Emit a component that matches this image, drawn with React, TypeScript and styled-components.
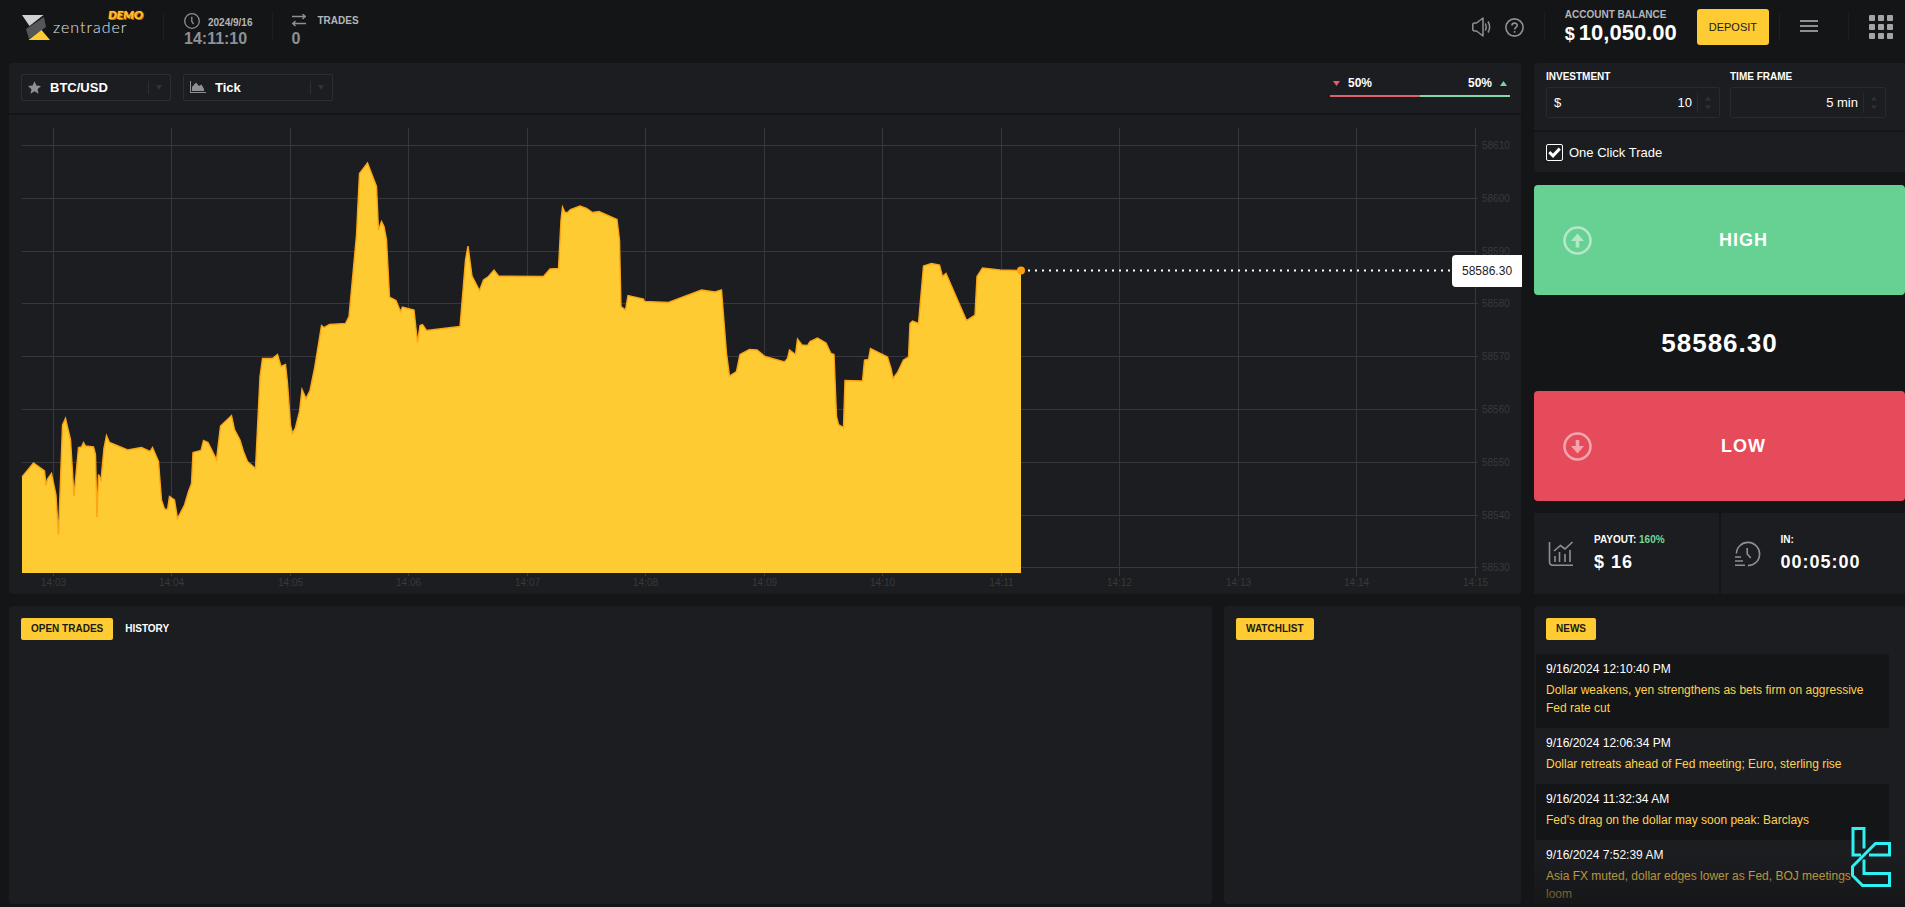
import React, { useState } from "react";
import styled, { createGlobalStyle } from "styled-components";

const color = {
  page: "#141517",
  panel: "#1c1d20",
  line: "#141518",
  border: "#2d2e33",
  muted: "#8f9095",
  label: "#b4b5b8",
  accent: "#ffcb32",
  green: "#67d194",
  red: "#e54b5a",
};

const GlobalStyle = createGlobalStyle`
  *, *::before, *::after { box-sizing: border-box; }
  body {
    margin: 0;
    background: ${color.page};
    color: #fff;
    font-family: "Liberation Sans", Arial, sans-serif;
    font-size: 12px;
  }
  button, input, select { font: inherit; color: inherit; margin: 0; }
  button { border: 0; padding: 0; background: none; cursor: pointer; }
  a { text-decoration: none; color: inherit; }
  svg { display: block; flex: none; }
`;

const Page = styled.div`
  display: flex;
  flex-direction: column;
  height: 100vh;
  min-height: 720px;
  overflow: hidden;
`;

/* ---------- header ---------- */

const Header = styled.header`
  display: flex;
  align-items: center;
  height: 54px;
  padding: 0 12px 0 20px;
  margin-bottom: 9px;
`;

const Separator = styled.span<{ $gap?: number }>`
  width: 1px;
  height: 28px;
  margin: 0 ${(p) => p.$gap ?? 20}px;
  background: #1e1f22;
`;

const Brand = styled.a`
  position: relative;
  display: flex;
  align-items: center;
  gap: 1px;
  width: 123px;
`;

const BrandName = styled.span`
  font-family: Lato, "Open Sans", sans-serif;
  font-weight: 300;
  font-size: 16px;
  line-height: 20px;
  letter-spacing: 1px;
  color: #e4e4e4;
`;

const DemoBadge = styled.span`
  position: absolute;
  right: 0;
  top: -4px;
  font-family: Lato, sans-serif;
  font-weight: 900;
  font-style: italic;
  font-size: 12px;
  line-height: 12px;
  color: #ffc42b;
  text-shadow: 0 0 1px #f08a10, 1px 1px 0 #c97a08;
`;

const Stat = styled.div`
  padding-top: 8px;
  font-weight: bold;
`;

const StatTop = styled.div<{ $align?: string; $gap: number }>`
  display: flex;
  align-items: ${(p) => p.$align ?? "center"};
  gap: ${(p) => p.$gap}px;
  height: 16px;
  font-size: 10px;
  line-height: 12px;
  color: ${color.label};
`;

const StatValue = styled.div`
  font-size: 16px;
  line-height: 20px;
  color: ${color.muted};
`;

const Spacer = styled.span`
  flex: 1;
`;

const IconButton = styled.button<{ $pad?: number; $gap?: number }>`
  padding: 0 ${(p) => p.$pad ?? 0}px;
  margin-right: ${(p) => p.$gap ?? 0}px;
  color: ${color.muted};
`;

const Balance = styled.div`
  margin-right: 20px;
  font-weight: bold;
`;

const BalanceLabel = styled.div`
  font-size: 10px;
  line-height: 12px;
  color: ${color.label};
`;

const BalanceValue = styled.div`
  display: flex;
  align-items: baseline;
  gap: 4px;
  font-size: 22px;
  line-height: 24px;
`;

const Currency = styled.span`
  font-size: 18px;
`;

const DepositButton = styled.button`
  height: 36px;
  padding: 0 12px;
  border-radius: 3px;
  background: ${color.accent};
  color: #1a1a1a;
  font-size: 11px;
`;

/* ---------- layout ---------- */

const Board = styled.main`
  flex: 1;
  min-height: 0;
  display: grid;
  grid-template-columns: minmax(0, 1fr) 371px;
  grid-template-rows: auto minmax(0, 1fr);
  gap: 12px 13px;
  padding: 0 0 3px 9px;
`;

const Panel = styled.section`
  background: ${color.panel};
  border-radius: 4px;
`;

const ChartPanel = styled(Panel)`
  display: flex;
  flex-direction: column;
`;

const Toolbar = styled.div`
  display: flex;
  align-items: center;
  gap: 12px;
  height: 52px;
  padding: 0 11px 2px 12px;
  border-bottom: 2px solid ${color.line};
`;

const Picker = styled.label`
  display: grid;
  grid-template-columns: 30px 1fr 22px;
  align-items: center;
  width: 150px;
  height: 27px;
  border: 1px solid ${color.border};
  border-radius: 2px;
  color: ${color.muted};

  > svg { grid-row: 1; grid-column: 1; margin-left: 6px; }
`;

const PickerSelect = styled.select<{ $indent: number }>`
  grid-row: 1;
  grid-column: 1 / 4;
  height: 25px;
  padding: 0 0 0 ${(p) => p.$indent}px;
  border: 0;
  background: transparent;
  appearance: none;
  color: #fff;
  font-size: 13px;
  font-weight: bold;
  option { color: #000; }
`;

const CaretCell = styled.span`
  grid-row: 1;
  grid-column: 3;
  display: flex;
  align-items: center;
  height: 13px;
  padding-left: 7px;
  border-left: 1px solid ${color.border};
  pointer-events: none;
`;

const Sentiment = styled.div`
  width: 180px;
  margin-left: auto;
  padding-bottom: 6px;
`;

const SentimentRow = styled.div`
  display: flex;
  align-items: center;
  gap: 8px;
  padding: 0 3px;
  height: 24px;
  font-size: 12px;
  font-weight: bold;
  > :nth-child(2) { margin-right: auto; }
`;

const SentimentBar = styled.div`
  height: 2px;
  background: linear-gradient(90deg, #dc616b 50%, #86d8ab 50%);
`;

const ChartSvg = styled.svg`
  width: 100%;
  height: auto;
  flex: 1;
  overflow: visible;
  font-family: "Liberation Sans", Arial, sans-serif;
`;

/* ---------- trade column ---------- */

const TradeColumn = styled.aside`
  display: flex;
  flex-direction: column;
`;

const OrderPanel = styled(Panel)`
  margin-bottom: 13px;
  border-radius: 4px 0 0 4px;
`;

const Fields = styled.div`
  display: flex;
  gap: 10px;
  padding: 7px 19px 12px 12px;
  border-bottom: 2px solid ${color.line};
`;

const Field = styled.div<{ $grow: number }>`
  flex: ${(p) => p.$grow} 1 0;
  min-width: 0;
`;

const FieldLabel = styled.label`
  display: block;
  margin-bottom: 3px;
  font-size: 10px;
  line-height: 14px;
  font-weight: bold;
`;

const FieldBox = styled.div`
  display: flex;
  align-items: center;
  height: 31px;
  padding-left: 7px;
  border: 1px solid #292a2e;
  border-radius: 2px;
  font-size: 13px;
`;

const FieldInput = styled.input`
  flex: 1;
  min-width: 0;
  padding: 0 5px 0 0;
  border: 0;
  background: transparent;
  text-align: right;
  outline: none;
`;

const Stepper = styled.span`
  display: flex;
  align-items: center;
  width: 22px;
  height: 20px;
  padding-left: 7px;
  border-left: 1px solid #292a2e;
`;

const CheckLabel = styled.label`
  display: flex;
  align-items: center;
  gap: 6px;
  height: 40px;
  padding: 0 12px;
  font-size: 13px;
`;

const CheckCell = styled.span`
  display: grid;
  place-items: center;
  > * { grid-area: 1 / 1; }
  > svg { pointer-events: none; }
`;

const CheckInput = styled.input`
  width: 17px;
  height: 17px;
  margin: 0;
  appearance: none;
  border: 1px solid #fff;
  border-radius: 2px;
`;

const TradeButton = styled.button<{ $bg: string }>`
  display: flex;
  align-items: center;
  height: 110px;
  padding: 0 10px 0 29px;
  border-radius: 4px;
  background: ${(p) => p.$bg};
  font-size: 18px;
  font-weight: bold;
  letter-spacing: 1px;
  > svg { opacity: 0.5; }
`;

const TradeText = styled.span`
  flex: 1;
  text-align: center;
`;

const Price = styled.div`
  flex: 1;
  display: flex;
  align-items: center;
  justify-content: center;
  min-height: 96px;
  font-size: 26px;
  line-height: 28px;
  font-weight: bold;
  letter-spacing: 1px;
`;

const Summary = styled.div`
  display: grid;
  grid-template-columns: 1fr 1fr;
  gap: 2px;
  height: 81px;
  margin-top: 12px;
`;

const SummaryCell = styled.div`
  display: flex;
  align-items: center;
  gap: 20px;
  padding-left: 14px;
  background: ${color.panel};
  color: ${color.muted};
`;

const SummaryLabel = styled.div`
  margin-bottom: 4px;
  font-size: 10px;
  line-height: 12px;
  font-weight: bold;
  color: #fff;
`;

const Percent = styled.span`
  color: #74d79d;
`;

const SummaryValue = styled.div`
  font-size: 18px;
  line-height: 24px;
  font-weight: bold;
  letter-spacing: 1px;
  color: #fff;
`;

/* ---------- bottom row ---------- */

const BottomLeft = styled.div`
  display: grid;
  grid-template-columns: minmax(0, 1fr) 297px;
  gap: 12px;
`;

const Tabs = styled.div`
  display: flex;
  gap: 12px;
  padding: 12px 12px 14px;
`;

const Tab = styled.button<{ $active?: boolean }>`
  height: 22px;
  padding: 0 ${(p) => (p.$active ? 10 : 0)}px;
  border-radius: 2px;
  background: ${(p) => (p.$active ? color.accent : "transparent")};
  color: ${(p) => (p.$active ? "#1c1a12" : "#fff")};
  font-size: 10px;
  line-height: 12px;
  font-weight: bold;
`;

const NewsPanel = styled(Panel)`
  position: relative;
  display: flex;
  flex-direction: column;
  min-height: 0;
  overflow: hidden;
  border-radius: 4px 0 0 0;
`;

const NewsList = styled.ul`
  flex: 1;
  min-height: 0;
  overflow: hidden;
  margin: 0 16px 0 2px;
  padding: 0;
  list-style: none;
`;

const NewsItem = styled.li`
  padding: 6px 20px 11px 10px;
  line-height: 18px;
  &:nth-child(odd) { background: ${color.page}; }
`;

const NewsDate = styled.time`
  display: block;
  margin-bottom: 3px;
`;

const NewsLink = styled.a`
  display: block;
  color: #ffd24d;
`;

const NewsFade = styled.div`
  position: absolute;
  left: 0;
  right: 0;
  bottom: 0;
  height: 50px;
  background: linear-gradient(rgba(20, 21, 23, 0), rgba(20, 21, 23, 0.75));
  pointer-events: none;
`;

const Watermark = styled.svg`
  position: absolute;
  right: 14px;
  bottom: 17px;
`;

/* ---------- chart data ---------- */

const series: [number, number][] = [
  [22, 477], [33.5, 463], [44.5, 471], [46, 485], [47.5, 479], [51.5, 473.5], [56, 495], [58.5, 535],
  [62.5, 425], [65.5, 418.5], [70.5, 439.5], [74, 496], [78.5, 447.5], [81.5, 447], [83.5, 442.5],
  [85.5, 446], [93.5, 447], [95.5, 454.5], [97, 517], [98.5, 474.5], [101, 480], [104, 448],
  [106.5, 435.5], [109.5, 442.5], [120.5, 447], [127.5, 450], [141.5, 447.5], [150, 451.5],
  [152.5, 447.5], [158.5, 461.5], [161.5, 500], [164.5, 509], [167.5, 509.5], [169.5, 496.5],
  [174.5, 500], [177.5, 518.5], [184.5, 505], [188.5, 491.5], [191.5, 483.5], [193, 452.5],
  [201, 450.5], [203.5, 440.5], [208, 442.5], [216.5, 459.5], [220.5, 426], [231.5, 415.5],
  [234.5, 429.5], [240, 440], [243.5, 451.5], [247.5, 461.5], [255.5, 468.5], [260, 376.5],
  [262.5, 358.5], [272.5, 358.5], [277.5, 354.5], [281, 366.5], [285.5, 364.5], [287.5, 383],
  [290.5, 425], [292.5, 433.5], [295.5, 427.5], [299.5, 411.5], [302, 389.5], [306, 398.5],
  [310, 390.5], [314.5, 368.5], [321.5, 325.5], [324, 327.5], [329.5, 324.5], [345.5, 323.5],
  [349, 316.5], [356.5, 235], [359.5, 173.5], [367.5, 163], [376.5, 186.5], [378.5, 230],
  [381.5, 221.5], [384, 226.5], [386.5, 239.5], [389.5, 297], [396, 300.5], [400.5, 311.5],
  [402.5, 307], [414, 310], [417.5, 342.5], [420, 325.5], [422.5, 324.5], [426.5, 330.5],
  [460, 326.5], [465.5, 260], [468, 246], [472, 276], [479.5, 290.5], [483.5, 280], [488.5, 276.5],
  [494, 270], [498.5, 276], [543.5, 276.5], [550, 269], [558.5, 268.5], [561, 220], [562.5, 207],
  [565, 212.5], [567.5, 212.5], [570.5, 209.5], [580, 206], [586.5, 208.5], [592.5, 212.5],
  [599, 211.5], [617, 219.5], [619.5, 240], [621, 306.5], [625.5, 310], [628, 295.5], [643.5, 299],
  [644.5, 301.5], [668.5, 302.5], [701.5, 290], [715, 292], [721.5, 290], [726.5, 353.5],
  [729.5, 376], [736.5, 371.5], [740, 354.5], [749.5, 349.5], [757, 350], [765, 356.5], [784.5, 362],
  [787.5, 358.5], [789.5, 350], [795.5, 354.5], [797.5, 339], [802, 345], [807.5, 345.5],
  [810, 341.5], [817.5, 338], [826, 343], [831, 353.5], [834, 354.5], [836.5, 416.5], [838.5, 424.5],
  [843.5, 427.5], [845, 380.5], [862.5, 381], [864.5, 360], [868.5, 359.5], [870.5, 348.5],
  [887.5, 357], [891, 368.5], [893, 378.5], [897.5, 372.5], [903.5, 360], [908.5, 357],
  [910, 323.5], [912.5, 321], [918.5, 323.5], [923.5, 266], [931.5, 263.5], [939.5, 265],
  [942.5, 276.5], [946, 273.5], [966.5, 320.5], [975, 315], [977, 276.5], [982.5, 268],
  [1000, 270], [1021, 270.5],
];

const line = series.map(([x, y], i) => `${i ? "L" : "M"}${x} ${y}`).join("");
const area = `${line}V573H22Z`;

const times = Array.from({ length: 13 }, (_, i) => ({
  x: Math.floor(53 + i * 118.5) + 0.5,
  text: `14:${String(i + 3).padStart(2, "0")}`,
}));
const prices = Array.from({ length: 9 }, (_, i) => ({
  y: Math.round(145 + i * 52.8) + 0.5,
  text: String(58610 - i * 10),
}));

const news = [
  ["9/16/2024 12:10:40 PM", "Dollar weakens, yen strengthens as bets firm on aggressive Fed rate cut"],
  ["9/16/2024 12:06:34 PM", "Dollar retreats ahead of Fed meeting; Euro, sterling rise"],
  ["9/16/2024 11:32:34 AM", "Fed's drag on the dollar may soon peak: Barclays"],
  ["9/16/2024 7:52:39 AM", "Asia FX muted, dollar edges lower as Fed, BOJ meetings loom"],
];

/* ---------- icons ---------- */

const LogoMark = () => (
  <svg width="32" height="28" viewBox="0 0 32 28">
    <path d="M2 2H23.5L9.5 13Z" fill="#d0d1d3" />
    <path d="M24 4L26 14L9 26L6 16Z" fill="#54565a" />
    <path d="M21.5 17L30 27H8.5Z" fill={color.accent} />
  </svg>
);

const Clock = () => (
  <svg width="16" height="16" viewBox="0 0 16 16" fill="none" stroke={color.muted} strokeWidth="1.3">
    <circle cx="8" cy="8" r="7.3" />
    <path d="M7.8 3.8V8.5L9.6 11" />
  </svg>
);

const Arrows = () => (
  <svg width="14" height="14" viewBox="0 0 14 14" fill="none" stroke={color.muted} strokeWidth="1.4">
    <path d="M0 2.5H13M10.5 0L13.2 2.5L10.5 5M14 9.5H1M3.5 7L0.8 9.5L3.5 12" />
  </svg>
);

const Speaker = () => (
  <svg width="19" height="20" viewBox="0 0 19 20" fill="none" stroke="currentColor" strokeWidth="1.5">
    <path d="M11 1V19L4.5 14H2.5Q0.8 14 0.8 12V8Q0.8 6 2.5 6H4.5Z" strokeLinejoin="round" />
    <path d="M13.3 6.5Q15 10 13.3 13.5M16 4.5Q19.2 10 16 15.5" />
  </svg>
);

const Help = () => (
  <svg width="19" height="19" viewBox="0 0 19 19" fill="none" stroke="currentColor" strokeWidth="1.6">
    <circle cx="9.5" cy="9.5" r="8.6" />
    <path d="M6.9 7.6C6.9 4.3 12.2 4.3 12.2 7.4C12.2 9.3 9.6 9.3 9.6 11.4M9.6 13V14.8" />
  </svg>
);

const Menu = () => (
  <svg width="18" height="14" viewBox="0 0 18 14" fill="currentColor">
    <path d="M0 0H18V2H0ZM0 5H18V7H0ZM0 10H18V12H0Z" />
  </svg>
);

const Apps = () => (
  <svg width="24" height="24" viewBox="0 0 24 24" fill="#a3a4a8">
    {[0, 9, 18].map((y) => [0, 9, 18].map((x) => <rect key={`${x}-${y}`} x={x} y={y} width="6" height="6" rx="1" />))}
  </svg>
);

const Star = () => (
  <svg width="13" height="13" viewBox="0 0 24 24" fill={color.muted}>
    <path d="M12 0.5L15.5 8.4L24 9.3L17.6 15L19.4 23.5L12 19.1L4.6 23.5L6.4 15L0 9.3L8.5 8.4Z" />
  </svg>
);

const AreaIcon = () => (
  <svg width="16" height="12" viewBox="0 0 16 12" fill={color.muted}>
    <path d="M0 0H1V11H16V12H0ZM2 10V6L6 1.5L9 5L11.5 3.5L14 8V10Z" />
  </svg>
);

const Triangle = ({ up, fill, size = 7 }: { up?: boolean; fill: string; size?: number }) => (
  <svg width={size} height="5" viewBox="0 0 7 5" fill={fill}>
    <path d={up ? "M0 5L3.5 0L7 5Z" : "M0 0H7L3.5 5Z"} />
  </svg>
);

const StepArrows = () => (
  <svg width="6" height="14" viewBox="0 0 6 14" fill="#303136">
    <path d="M0 4.5L3 0.5L6 4.5ZM0 9.5H6L3 13.5Z" />
  </svg>
);

const CircleArrow = ({ down }: { down?: boolean }) => (
  <svg width="29" height="29" viewBox="0 0 29 29">
    <circle cx="14.5" cy="14.5" r="13" fill="none" stroke="#fff" strokeWidth="2.6" />
    <path d={down ? "M12.7 8H16.3V14H21L14.5 21.5L8 14H12.7Z" : "M12.7 21.5H16.3V15H21L14.5 7.5L8 15H12.7Z"} fill="#fff" />
  </svg>
);

const PayoutIcon = () => (
  <svg width="26" height="26" viewBox="0 0 26 26" fill="none" stroke="currentColor" strokeWidth="1.6">
    <path d="M1.5 1V20.5Q1.5 24.2 5 24.2H25" />
    <path d="M6 10L12.5 4.5L17 8L24.5 1M7 15V21M11.5 11V21M17 13V21M22 9V21" />
  </svg>
);

const ExpiryIcon = () => (
  <svg width="26" height="26" viewBox="0 0 26 26" fill="none" stroke="currentColor" strokeWidth="1.6">
    <path d="M1.4 12.5A11.6 11.6 0 1 1 13 24.6" />
    <path d="M12.2 7V13L15.8 17M0 16H6M0 20H8M0 24.2H10" />
  </svg>
);

interface SelectProps {
  label: string;
  icon: React.ReactNode;
  value: string;
  indent: number;
}

const Select = ({ label, icon, value, indent }: SelectProps) => (
  <Picker>
    {icon}
    <PickerSelect aria-label={label} defaultValue={value} $indent={indent}>
      <option>{value}</option>
    </PickerSelect>
    <CaretCell>
      <Triangle fill="#34353a" size={6} />
    </CaretCell>
  </Picker>
);

const PriceChart = () => (
  <ChartSvg viewBox="9 115 1512 479" role="img" aria-label="BTC/USD tick chart">
    <g stroke="#37383c">
      {times.map((t) => <path key={t.text} d={`M${t.x} 128V576`} />)}
      {prices.map((p) => <path key={p.text} d={`M22 ${p.y}H1478`} />)}
    </g>
    <g fill="#38393d" fontSize="10">
      {times.map((t) => <text key={t.text} x={t.x} y="586" textAnchor="middle">{t.text}</text>)}
      {prices.map((p) => <text key={p.text} x="1482" y={p.y + 3}>{p.text}</text>)}
    </g>
    <path d={area} fill={color.accent} />
    <path d={line} fill="none" stroke="#fba616" strokeWidth="1.4" />
    <path d="M1028 270.5H1451" stroke="#fff" strokeWidth="2" strokeDasharray="2 5" />
    <circle cx="1021" cy="270.5" r="4" fill="#ffa20d" />
    <path d="M1456 255H1522V287H1456Q1452 287 1452 283V259Q1452 255 1456 255Z" fill="#fff" />
    <text x="1462" y="275" fontSize="12" fill="#1b1c1f">58586.30</text>
  </ChartSvg>
);

export default function App() {
  const [oneClick, setOneClick] = useState(true);

  return (
    <Page>
      <GlobalStyle />
      <Header>
        <Brand href="#">
          <LogoMark />
          <BrandName>zentrader</BrandName>
          <DemoBadge>DEMO</DemoBadge>
        </Brand>
        <Separator />
        <Stat>
          <StatTop $align="flex-end" $gap={8}>
            <Clock />
            2024/9/16
          </StatTop>
          <StatValue>14:11:10</StatValue>
        </Stat>
        <Separator $gap={19} />
        <Stat>
          <StatTop $gap={12}>
            <Arrows />
            TRADES
          </StatTop>
          <StatValue>0</StatValue>
        </Stat>
        <Spacer />
        <IconButton aria-label="Sound" $gap={14}><Speaker /></IconButton>
        <IconButton aria-label="Help"><Help /></IconButton>
        <Separator />
        <Balance>
          <BalanceLabel>ACCOUNT BALANCE</BalanceLabel>
          <BalanceValue>
            <Currency>$</Currency>10,050.00
          </BalanceValue>
        </Balance>
        <DepositButton>DEPOSIT</DepositButton>
        <Separator $gap={10} />
        <IconButton aria-label="Menu" $pad={10}><Menu /></IconButton>
        <Separator />
        <IconButton aria-label="Apps"><Apps /></IconButton>
      </Header>

      <Board>
        <ChartPanel>
          <Toolbar>
            <Select label="Asset" icon={<Star />} value="BTC/USD" indent={28} />
            <Select label="Chart type" icon={<AreaIcon />} value="Tick" indent={31} />
            <Sentiment>
              <SentimentRow>
                <Triangle fill="#e0606c" />
                <span>50%</span>
                <span>50%</span>
                <Triangle up fill="#74d79d" />
              </SentimentRow>
              <SentimentBar />
            </Sentiment>
          </Toolbar>
          <PriceChart />
        </ChartPanel>

        <TradeColumn>
          <OrderPanel>
            <Fields>
              <Field $grow={174}>
                <FieldLabel htmlFor="investment">INVESTMENT</FieldLabel>
                <FieldBox>
                  <span>$</span>
                  <FieldInput id="investment" defaultValue="10" />
                  <Stepper><StepArrows /></Stepper>
                </FieldBox>
              </Field>
              <Field $grow={156}>
                <FieldLabel htmlFor="timeframe">TIME FRAME</FieldLabel>
                <FieldBox>
                  <FieldInput id="timeframe" defaultValue="5 min" />
                  <Stepper><StepArrows /></Stepper>
                </FieldBox>
              </Field>
            </Fields>
            <CheckLabel>
              <CheckCell>
                <CheckInput type="checkbox" checked={oneClick} onChange={(e) => setOneClick(e.target.checked)} />
                {oneClick && (
                  <svg width="13" height="11" viewBox="0 0 13 11" fill="none" stroke="#fff" strokeWidth="3">
                    <path d="M1.3 5.2L5 8.8L11.8 1.6" />
                  </svg>
                )}
              </CheckCell>
              One Click Trade
            </CheckLabel>
          </OrderPanel>
          <TradeButton $bg={color.green}>
            <CircleArrow />
            <TradeText>HIGH</TradeText>
          </TradeButton>
          <Price>58586.30</Price>
          <TradeButton $bg={color.red}>
            <CircleArrow down />
            <TradeText>LOW</TradeText>
          </TradeButton>
          <Summary>
            <SummaryCell>
              <PayoutIcon />
              <div>
                <SummaryLabel>PAYOUT: <Percent>160%</Percent></SummaryLabel>
                <SummaryValue>$ 16</SummaryValue>
              </div>
            </SummaryCell>
            <SummaryCell>
              <ExpiryIcon />
              <div>
                <SummaryLabel>IN:</SummaryLabel>
                <SummaryValue>00:05:00</SummaryValue>
              </div>
            </SummaryCell>
          </Summary>
        </TradeColumn>

        <BottomLeft>
          <Panel>
            <Tabs>
              <Tab $active>OPEN TRADES</Tab>
              <Tab>HISTORY</Tab>
            </Tabs>
          </Panel>
          <Panel>
            <Tabs>
              <Tab $active>WATCHLIST</Tab>
            </Tabs>
          </Panel>
        </BottomLeft>

        <NewsPanel>
          <Tabs>
            <Tab $active>NEWS</Tab>
          </Tabs>
          <NewsList>
            {news.map(([date, title]) => (
              <NewsItem key={date}>
                <NewsDate>{date}</NewsDate>
                <NewsLink href="#">{title}</NewsLink>
              </NewsItem>
            ))}
          </NewsList>
          <NewsFade />
          <Watermark width="40" height="60" viewBox="0 0 40 60" fill="none" stroke="#2ff0f4" strokeWidth="3" aria-hidden="true">
            <path d="M10 28H2V1.5H13V21.5" />
            <path d="M13 32.5V46.5H38.5V58.5H11.5L1.5 48.5V39.5L24.5 16.5H38.5V28H18" />
          </Watermark>
        </NewsPanel>
      </Board>
    </Page>
  );
}
